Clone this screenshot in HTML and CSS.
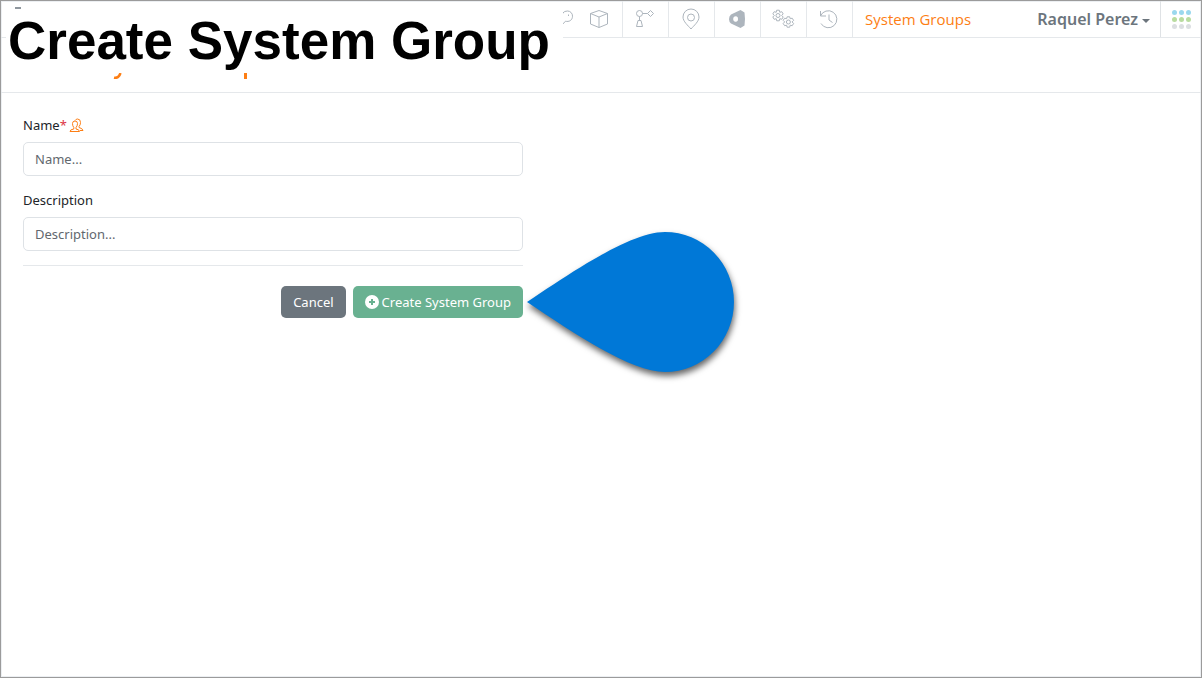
FILE: index.html
```html
<!DOCTYPE html>
<html lang="en">
<head>
<meta charset="utf-8">
<meta name="viewport" content="width=device-width, initial-scale=1">
<title>Create System Group</title>
<link rel="stylesheet" href="styles.css">
</head>
<body>
<div class="frame">
  <nav class="navbar" aria-label="Main">
    <div class="brand">
      <svg class="brand-mark" width="6" height="2" aria-hidden="true"><path d="M0 1h6" stroke="#8f979e" stroke-width="2"/></svg>
    </div>
    <a class="nav-icon nav-first" href="#keys" aria-label="Keys">
      <svg width="24" height="24" viewBox="0 0 24 24"><path d="M11 12q-1-8 5.500-8a5 5 0 0 1 5 5.200c0 4-3.500 6-7 5l-5 5.300M17.500 7.500v1.500"/></svg>
    </a>
    <a class="nav-icon" href="#objects" aria-label="Objects">
      <svg width="24" height="24" viewBox="0 0 24 24"><path d="M12 3.500l8.500 3v10.500L12 20.500 3.500 17V6.500zM3.500 6.500L12 10l8.500-3.500M12 10v10.500"/></svg>
    </a>
    <a class="nav-icon" href="#networks" aria-label="Networks">
      <svg width="24" height="24" viewBox="0 0 24 24"><circle cx="6.500" cy="6.500" r="3"/><path d="M9.500 6.500h5M17.500 3.500l3 3-3 3-3-3zM6.500 9.500v4M5 13.500h3l1.500 6h-6z"/></svg>
    </a>
    <a class="nav-icon" href="#locations" aria-label="Locations">
      <svg width="24" height="24" viewBox="0 0 24 24"><path d="M12 22C9 18.500 4 14.500 4 10a8 8 0 0 1 16 0c0 4.500-5 8.500-8 12z"/><circle cx="12" cy="10.500" r="3.500"/></svg>
    </a>
    <a class="nav-icon" href="#records" aria-label="Records">
      <svg width="24" height="24" viewBox="0 0 24 24"><path class="solid" fill-rule="evenodd" d="M15.500 3l4 2.500q1 6.500 0 13l-4 2.500L6 16.500Q4 15 4 12.300 4 9 6 7.500zM9.500 9.500a3 3 0 0 0 0 5q3.500 1 3.500-2.500t-3.500-2.500z"/></svg>
    </a>
    <a class="nav-icon" href="#settings" aria-label="Settings">
      <svg width="24" height="24" viewBox="0 0 24 24"><path d="M5.200 5.300L5.700 3.200h2.600l.5 2.100 2-.6 1.400 2.200-1.500 1.500 1.500 1.600-1.400 2.300-2-.6-.5 2.100H5.700l-.5-2.100-2 .6-1.400-2.300 1.500-1.600-1.500-1.500 1.400-2.200z"/><circle cx="7" cy="8.500" r="2"/><path d="M15.600 11.700l.5-1.900h2.600l.5 1.900 2-.5 1.400 2.200-1.500 1.500 1.500 1.600-1.400 2.200-2-.5-.5 2h-2.600l-.5-2-2 .5-1.400-2.200 1.500-1.600-1.500-1.500 1.400-2.200z"/><circle cx="17.400" cy="15" r="2"/></svg>
    </a>
    <a class="nav-icon" href="#history" aria-label="History">
      <svg width="24" height="24" viewBox="0 0 24 24"><path d="M3.500 4v5H9M3.500 9a8.500 8.500 0 1 1 .5 7.500M12 7.500V13l3.500 2.500"/></svg>
    </a>
    <a class="nav-current" href="#system-groups">System Groups</a>
    <button class="user" type="button">Raquel Perez<span class="caret"></span></button>
    <button class="apps" type="button" aria-label="Applications">
      <svg width="20" height="20" viewBox="0 0 20 20"><g fill="#9bd8ee"><circle cx="3.500" cy="3.500" r="2.500"/><circle cx="10.500" cy="3.500" r="2.500"/><circle cx="17.500" cy="3.500" r="2.500"/></g><g fill="#b9dca0"><circle cx="3.500" cy="10.500" r="2.500"/><circle cx="10.500" cy="10.500" r="2.500"/><circle cx="17.500" cy="10.500" r="2.500"/></g><g fill="#dcdfe2"><circle cx="3.500" cy="17.500" r="2.500"/><circle cx="10.500" cy="17.500" r="2.500"/><circle cx="17.500" cy="17.500" r="2.500"/></g></svg>
    </button>
  </nav>

  <header class="page-head">
    <svg class="head-marks" width="134" height="6" viewBox="0 0 134 6" aria-hidden="true"><path d="M1 4.700q4.500 1 6.500-4.700" fill="none" stroke="#fd7e14" stroke-width="2.500"/><path d="M131 0h3v6h-3z" fill="#fd7e14"/></svg>
  </header>

  <main class="content">
    <form class="group-form">
      <div class="field">
        <label for="name">Name<span class="required">*</span>
          <svg class="people" width="15" height="15" viewBox="0 0 15 15" aria-hidden="true"><path d="M1 13.500h9.500q0-2-3.500-2.500V9.500Q8.500 8 8.500 5.500 8.500 3 6 3T3.500 5.500Q3.500 8 4.800 9.500V11Q1 11.500 1 13.500zM6 2.500Q7 1 8.500 1q3 0 3 3.500 0 2.500-1.500 4V9.500q3.500.8 4 3h-3"/></svg>
        </label>
        <input id="name" type="text" placeholder="Name..." required>
      </div>
      <div class="field">
        <label for="description">Description</label>
        <input id="description" type="text" placeholder="Description...">
      </div>
      <div class="actions">
        <button class="btn cancel" type="button">Cancel</button>
        <button class="btn create" type="submit">
          <svg width="14" height="14" viewBox="0 0 14 14" aria-hidden="true"><circle cx="7" cy="7" r="7" fill="#fff"/><path d="M7 4v6M4 7h6" stroke="#69b191" stroke-width="2"/></svg>
          Create System Group
        </button>
        <svg class="pointer" width="220" height="160" viewBox="0 0 220 160" aria-hidden="true"><path d="M4 80C52 48 108 10 142 10a69 70 0 0 1 0 140C108 150 52 112 4 80z" fill="#0078d7"/></svg>
      </div>
    </form>
  </main>

  <h1 class="caption">Create System Group</h1>
</div>
</body>
</html>
```

FILE: styles.css
```css
* {
  box-sizing: border-box;
}

body {
  margin: 0;
  background: #fff;
  color: #212529;
  font-family: "Noto Sans", "Open Sans", sans-serif;
  font-size: 13px;
  line-height: 20px;
}

button,
input {
  font: inherit;
}

.frame {
  position: relative;
  min-height: 100vh;
  border: 1px solid #9b9b9b;
  box-shadow: inset 0 0 0 1px #eceff2;
}

.navbar {
  display: flex;
  height: 37px;
  border-bottom: 1px solid #e5e8eb;
}

.brand {
  flex: 0 0 550px;
  padding: 6px 14px;
}

.brand-mark {
  display: block;
}

.nav-icon {
  display: flex;
  flex: 0 0 46px;
  align-items: center;
  justify-content: center;
  padding-right: 2px;
  border-right: 1px solid #e5e8eb;
}

.nav-first {
  flex-basis: 26px;
  border-right: 0;
}

.nav-icon svg {
  flex: none;
  fill: none;
  stroke: #adb5bd;
  stroke-width: 1;
}

.nav-icon .solid {
  fill: #adb5bd;
  stroke: none;
}

.nav-current {
  padding-left: 12px;
  color: #fd7e14;
  font-family: "Open Sans", "Noto Sans", sans-serif;
  font-size: 15px;
  line-height: 36px;
  text-decoration: none;
  white-space: nowrap;
}

.user {
  display: flex;
  align-items: center;
  gap: 4px;
  margin-left: auto;
  padding: 0 10px;
  border: 0;
  background: none;
  color: #6c757d;
  font-size: 16px;
  font-weight: 600;
  white-space: nowrap;
}

.caret {
  margin-top: 4px;
  border-top: 4px solid #6c757d;
  border-right: 4px solid transparent;
  border-left: 4px solid transparent;
}

.apps {
  display: flex;
  flex: 0 0 41px;
  align-items: center;
  justify-content: center;
  padding: 0;
  border: 0;
  border-left: 1px solid #dfe2e5;
  background: none;
}

.page-head {
  height: 55px;
  padding: 35px 0 0 112px;
  border-bottom: 1px solid #e5e8eb;
}

.head-marks {
  display: block;
}

.content {
  padding: 22px;
}

.group-form {
  max-width: 500px;
}

.field {
  margin-bottom: 14px;
}

.field label {
  display: flex;
  align-items: center;
  margin-bottom: 7px;
}

.required {
  color: #dc3545;
}

.people {
  margin-left: 2px;
  fill: none;
  stroke: #fd7e14;
}

.field input {
  display: block;
  width: 100%;
  height: 34px;
  padding: 0 11px;
  border: 1px solid #dee2e6;
  border-radius: 5px;
  background: #fff;
  color: #212529;
}

.field input::placeholder {
  color: #62686e;
  opacity: 1;
}

.actions {
  position: relative;
  display: flex;
  justify-content: flex-end;
  gap: 7px;
  padding-top: 20px;
  border-top: 1px solid #e5e8eb;
}

.btn {
  display: flex;
  align-items: center;
  gap: 3px;
  height: 32px;
  padding: 0 12px;
  border: 0;
  border-radius: 5px;
  color: #fff;
  white-space: nowrap;
}

.cancel {
  background: #6c757d;
}

.create {
  background: #69b191;
}

.pointer {
  position: absolute;
  top: -44px;
  left: 100%;
  filter: drop-shadow(1px 4px 3px rgba(0, 0, 0, 0.6));
}

.caption {
  position: absolute;
  top: 8px;
  left: 5px;
  margin: 0;
  padding: 0 13px 0 2px;
  background: #fff;
  font-family: "Liberation Sans", Arial, sans-serif;
  font-size: 53px;
  font-weight: 700;
  line-height: 64px;
  color: #000;
  white-space: nowrap;
}
```
